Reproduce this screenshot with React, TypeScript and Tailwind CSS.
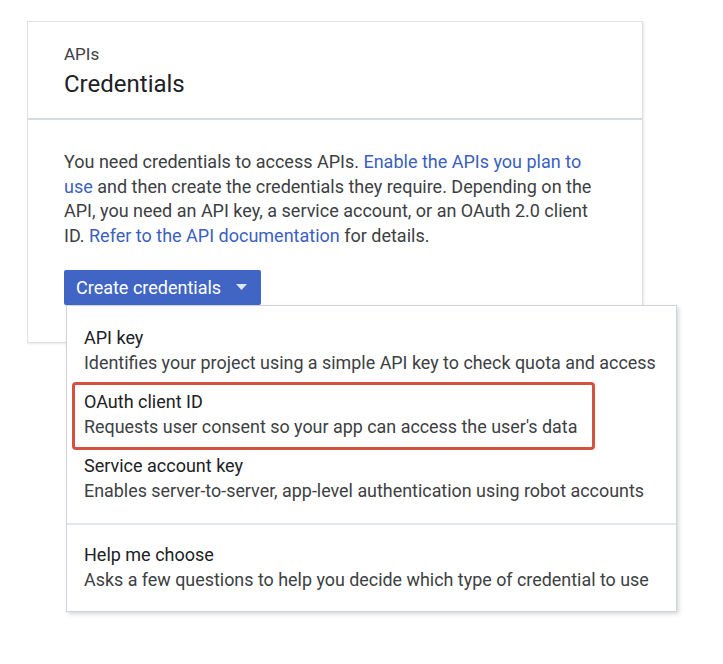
export default function App() {
  return (
    <div className="min-h-[664px] w-[723px] bg-white pl-[27px] pt-[21px] font-['Roboto',sans-serif]">
      <div className="w-[616px] border border-[#dde1e6] bg-white shadow-[1px_1px_2px_rgba(60,64,67,0.12)]">
        <div className="border-b-2 border-[#d6dbe1] px-[36px] pt-[22px] pb-[19px]">
          <div className="text-[17px] leading-[21px] text-[#3c4043]">APIs</div>
          <div className="mt-[4px] text-[24px] leading-[30px] text-[#202124]">Credentials</div>
        </div>
        <div className="px-[36px] pt-[30px] pb-[37px]">
          <p className="w-[545px] text-[18px] leading-[24.7px] text-[#3c4043]">
            You need credentials to access APIs.{" "}
            <span className="text-[#3b5fc0]">Enable the APIs you plan to use</span> and then create the
            credentials they require. Depending on the API, you need an API key, a service account, or an
            OAuth 2.0 client ID. <span className="text-[#3b5fc0]">Refer to the API documentation</span> for
            details.
          </p>
          <div className="relative mt-[21px]">
            <button className="flex h-[35px] w-[197px] items-center rounded-[2px] bg-[#4065c4] pl-[12px] text-[18px] text-white">
              <span>Create credentials</span>
              <svg className="ml-[15px]" width="11" height="6" viewBox="0 0 11 6">
                <path d="M0 0h11L5.5 6z" fill="#dfe6f6" />
              </svg>
            </button>
            <div className="absolute left-[2px] top-full z-10 w-[611px] border border-[#cfd4db] bg-white pt-[16px] pb-[8px] shadow-[2px_2px_4px_rgba(60,64,67,0.2)]">
              <MenuItem title="API key" desc="Identifies your project using a simple API key to check quota and access" />
              <div className="relative">
                <MenuItem title="OAuth client ID" desc="Requests user consent so your app can access the user's data" />
                <div className="pointer-events-none absolute left-[5px] top-[-4px] h-[68px] w-[523px] rounded-[4px] border-[3px] border-[#d2533e]" />
              </div>
              <MenuItem title="Service account key" desc="Enables server-to-server, app-level authentication using robot accounts" />
              <div className="mt-[9px] border-t-2 border-[#e3e6ea]" />
              <div className="pt-[14px]">
                <MenuItem title="Help me choose" desc="Asks a few questions to help you decide which type of credential to use" />
              </div>
            </div>
          </div>
        </div>
      </div>
    </div>
  );
}

function MenuItem({ title, desc }: { title: string; desc: string }) {
  return (
    <div className="h-[64px] px-[17px] pt-[3px]">
      <div className="whitespace-nowrap text-[18px] leading-[25px] text-[#202124]">{title}</div>
      <div className="whitespace-nowrap text-[17.9px] leading-[25px] text-[#3c4043]">{desc}</div>
    </div>
  );
}
